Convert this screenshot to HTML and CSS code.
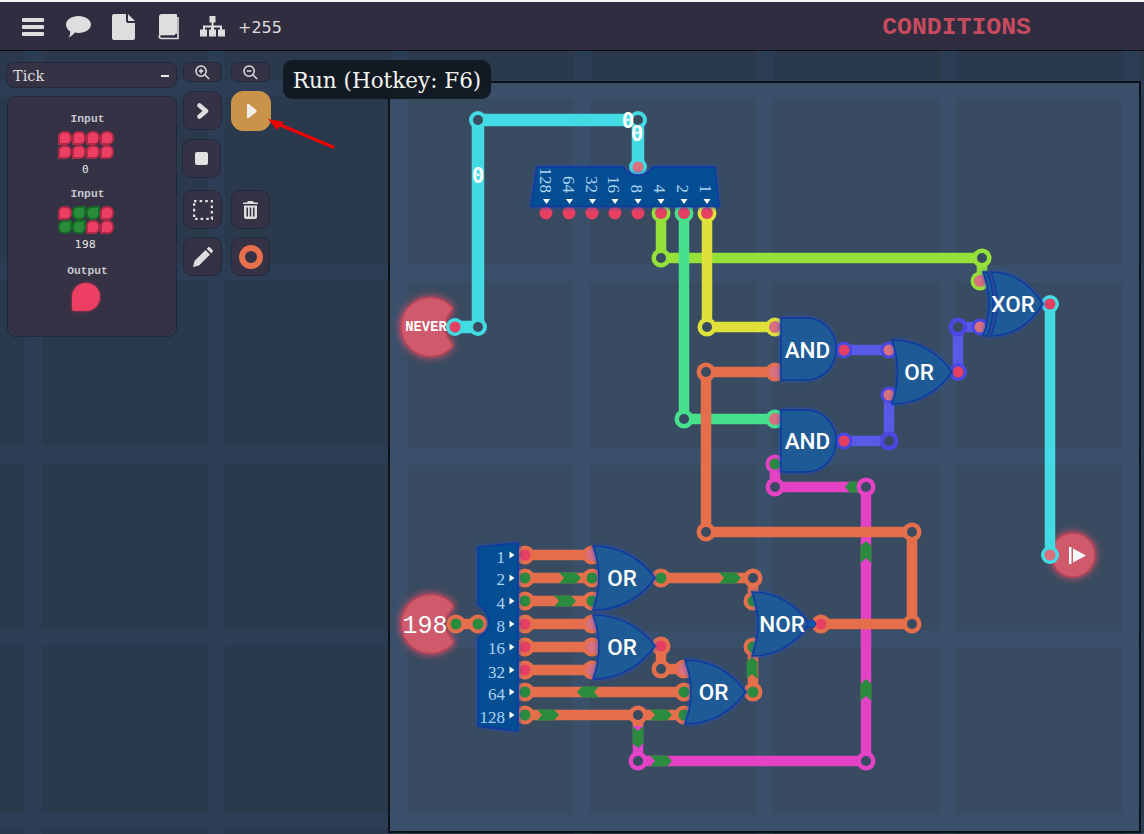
FILE: index.html
```html
<!DOCTYPE html>
<html lang="en">
<head>
<meta charset="utf-8">
<title>Conditions</title>
<link rel="stylesheet" href="styles.css">
</head>
<body>
<header class="topbar">
  <nav class="topnav">
    <svg class="ico i-menu" viewBox="0 0 22 18"><path d="M1 0h20a1 1 0 0 1 1 1v2a1 1 0 0 1-1 1H1a1 1 0 0 1-1-1V1a1 1 0 0 1 1-1zM1 7h20a1 1 0 0 1 1 1v2a1 1 0 0 1-1 1H1a1 1 0 0 1-1-1V8a1 1 0 0 1 1-1zM1 14h20a1 1 0 0 1 1 1v2a1 1 0 0 1-1 1H1a1 1 0 0 1-1-1v-2a1 1 0 0 1 1-1z"/></svg>
    <svg class="ico i-chat" viewBox="0 0 25 22"><path d="M12.500 0C19.400 0 25 3.700 25 8.500S19.400 17 12.500 17c-1.300 0-2.500-.1-3.700-.4C7.300 18.500 5.200 20.500 2.700 21.700c.8-1.400 1.500-3.300 1.600-6.200C1.700 14 0 11.400 0 8.500 0 3.700 5.600 0 12.500 0z"/></svg>
    <svg class="ico i-file" viewBox="0 0 23 26"><path d="M2 0h12v7a2 2 0 0 0 2 2h7v15a2 2 0 0 1-2 2H2a2 2 0 0 1-2-2V2a2 2 0 0 1 2-2zM16 0l7 7h-7z"/></svg>
    <svg class="ico i-book" viewBox="0 0 21 26"><path d="M3 0h15a1 1 0 0 1 1 1v18a1 1 0 0 1-1 1H3.500C2.400 20 1.500 20.500 1 21V3a3 3 0 0 1 2-3z" /><path class="line" d="M20 3v21.500H4c-3.600 0-3.600-4 0-4h13"/></svg>
    <svg class="ico i-tree" viewBox="0 0 25 21"><path d="M9.500 0h6v6.500h-2v3h8.500v4h3v7h-7v-7h2v-2h-6v2h2v7h-7v-7h2v-2h-6v2h2v7H0v-7h3v-4h8.500v-3h-2z"/></svg>
    <span class="count">+255</span>
  </nav>
  <h1 class="title">CONDITIONS</h1>
</header>

<main class="workspace">
  <aside class="side">
    <div class="leftcol">
      <div class="select"><span>Tick</span><i class="dash"></i></div>
      <section class="pins">
        <h2 class="pin-name">Input</h2>
        <div class="bits">
          <i class="bit"></i><i class="bit"></i><i class="bit"></i><i class="bit"></i>
          <i class="bit"></i><i class="bit"></i><i class="bit"></i><i class="bit"></i>
        </div>
        <p class="pin-val">0</p>
        <h2 class="pin-name second">Input</h2>
        <div class="bits">
          <i class="bit"></i><i class="bit on"></i><i class="bit on"></i><i class="bit"></i>
          <i class="bit on"></i><i class="bit on"></i><i class="bit"></i><i class="bit"></i>
        </div>
        <p class="pin-val">198</p>
        <h2 class="pin-name third">Output</h2>
        <i class="drop"></i>
      </section>
    </div>
    <div class="tools">
      <div class="row">
        <button class="btn small"><svg class="ico" viewBox="0 0 16 16"><circle class="line" cx="6.500" cy="6.500" r="5.500"/><path class="line" d="M4 6.500h5M6.500 4v5M10.500 10.500l4.500 4.500"/></svg></button>
        <button class="btn small"><svg class="ico" viewBox="0 0 16 16"><circle class="line" cx="6.500" cy="6.500" r="5.500"/><path class="line" d="M4 6.500h5M10.500 10.500l4.500 4.500"/></svg></button>
      </div>
      <div class="row tight">
        <button class="btn"><svg class="ico i-next" viewBox="0 0 12 16"><path class="chev" d="M2.500 2.500L9 8l-6.500 5.500"/></svg></button>
        <button class="btn run"><svg class="ico i-play" viewBox="0 0 12 16"><path d="M1 1.500c0-1.200 1-1.800 2-1.100l8 6.300c.9.700.9 1.900 0 2.600l-8 6.300c-1 .7-2 .1-2-1.100z"/></svg></button>
      </div>
      <div class="row"><button class="btn shift"><i class="stop"></i></button></div>
      <div class="row gap">
        <button class="btn"><svg class="ico i-sel" viewBox="0 0 20 20"><path class="dots" d="M1 1H19V19H1Z"/></svg></button>
        <button class="btn"><svg class="ico i-trash" viewBox="0 0 15 18"><path d="M5 0h5l1 1.500h3.500a.5.500 0 0 1 .5.500v1H0V2a.5.500 0 0 1 .5-.5H4zM1 4.500h13V16a2 2 0 0 1-2 2H3a2 2 0 0 1-2-2zM3.500 6.500v9h1.500v-9zM6.750 6.500v9h1.500v-9zM10 6.500v9h1.500v-9z"/></svg></button>
      </div>
      <div class="row">
        <button class="btn"><svg class="ico i-pencil" viewBox="0 0 20 20"><path d="M0 20l1.500-6L12.500 3l4.500 4.500L6 18.500zM13.700 1.800l1.300-1.300c.7-.6 1.500-.6 2.100 0l2.400 2.400c.6.600.6 1.400 0 2.100l-1.300 1.300z"/></svg></button>
        <button class="btn"><i class="ring"></i></button>
      </div>
    </div>
  </aside>

  <section class="board">
    <svg class="circuit" viewBox="390 83 749 748">
      <defs>
        <path id="chev" d="M-11-5.500H6L11 0 6 5.500H-11L-6 0Z"/>
        <path id="tri" d="M-3.500-2.500H3.500L0 2.500Z"/>
      </defs>

      <!-- inputs blocks -->
      <path class="block" d="M453 308A29.500 29.500 0 1 0 453 346L442 327Z"/>
      <path class="block" d="M454 606A29.500 29.500 0 1 0 454 642L442 624Z"/>
      <path class="block" d="M1056 541A22 22 0 1 1 1056 569L1050 555Z"/>

      <!-- wires -->
      <path class="w thick cyan" d="M455 327H478V120H638V167"/>
      <path class="w lime" d="M661 213V258H982V281"/>
      <path class="w green" d="M684 213V419H775"/>
      <path class="w yellow" d="M707 213V327H775"/>
      <path class="w purple" d="M844 350H889M844 441H889V395M958 372V327H982"/>
      <path class="w cyan" d="M1050 304V555"/>
      <path class="w pink" d="M638 715V761H866V487H775V464"/>
      <path class="w orange" d="M821 624H912V532H706V372H775M456 624H478M525 555H592M525 578H592M525 601H592M525 624H592M525 647H592M525 670H592M525 692H684M525 715H684M661 578H753V601M661 646V669H684M753 692V647"/>
      <path class="w orange" d="M638 715V726"/>

      <!-- chevrons -->
      <g class="chevs">
        <use href="#chev" transform="translate(570 578)"/>
        <use href="#chev" transform="translate(565 601)"/>
        <use href="#chev" transform="translate(588 692) rotate(180)"/>
        <use href="#chev" transform="translate(548 715)"/>
        <use href="#chev" transform="translate(661 715)"/>
        <use href="#chev" transform="translate(730 578)"/>
        <use href="#chev" transform="translate(661 761)"/>
        <use href="#chev" transform="translate(752 668) rotate(-90)"/>
        <use href="#chev" transform="translate(638 737) rotate(90)"/>
        <use href="#chev" transform="translate(866 552) rotate(-90)"/>
        <use href="#chev" transform="translate(866 690) rotate(-90)"/>
        <use href="#chev" transform="translate(856 487) rotate(180)"/>
      </g>

      <!-- ring joints -->
      <g class="joints">
        <circle class="c-cyan" cx="478" cy="120" r="9"/><circle class="c-cyan" cx="638" cy="120" r="9"/><circle class="c-cyan" cx="478" cy="327" r="9"/>
        <circle class="c-lime" cx="661" cy="258" r="9.500"/><circle class="c-lime" cx="982" cy="258" r="9.500"/>
        <circle class="c-green" cx="684" cy="419" r="9.500"/>
        <circle class="c-yellow" cx="707" cy="327" r="9.500"/>
        <circle class="c-purple" cx="958" cy="327" r="9.500"/><circle class="c-purple" cx="889" cy="441" r="9.500"/>
        <circle class="c-orange" cx="706" cy="372" r="9.500"/><circle class="c-orange" cx="706" cy="532" r="9.500"/><circle class="c-orange" cx="912" cy="532" r="9.500"/><circle class="c-orange" cx="912" cy="624" r="9.500"/><circle class="c-orange" cx="753" cy="578" r="9.500"/><circle class="c-orange" cx="661" cy="669" r="9.500"/><circle class="c-orange" cx="638" cy="715" r="9.500"/>
        <circle class="c-pink" cx="866" cy="487" r="9.500"/><circle class="c-pink" cx="775" cy="487" r="9.500"/><circle class="c-pink" cx="866" cy="761" r="9.500"/><circle class="c-pink" cx="638" cy="761" r="9.500"/>
      </g>

      <!-- pins -->
      <g class="pinset">
        <circle class="p-cyan" cx="455" cy="327" r="9"/><circle class="p-cyan" cx="638" cy="167" r="9"/><circle class="p-cyan" cx="1050" cy="304" r="9"/><circle class="p-cyan" cx="1050" cy="555" r="9"/>
        <circle class="p-lime" cx="661" cy="213" r="9.500"/><circle class="p-lime" cx="980" cy="281" r="9.500"/>
        <circle class="p-green" cx="684" cy="213" r="9.500"/><circle class="p-green" cx="775" cy="419" r="9.500"/>
        <circle class="p-yellow" cx="707" cy="213" r="9.500"/><circle class="p-yellow" cx="775" cy="327" r="9.500"/>
        <circle class="p-purple" cx="844" cy="350" r="8.500"/><circle class="p-purple" cx="844" cy="441" r="8.500"/><circle class="p-purple" cx="889" cy="350" r="8.500"/><circle class="p-purple" cx="889" cy="395" r="8.500"/><circle class="p-purple" cx="958" cy="372" r="9"/><circle class="p-purple" cx="980" cy="327" r="8.500"/>
        <circle class="p-orange" cx="775" cy="372" r="9.500"/><circle class="p-orange" cx="821" cy="624" r="9.500"/>
        <circle class="p-pink" cx="775" cy="464" r="9.500"/>
        <circle class="p-orange" cx="456" cy="624" r="9.500"/><circle class="p-orange" cx="478" cy="624" r="9.500"/>
        <circle class="p-orange" cx="525" cy="555" r="9.500"/><circle class="p-orange" cx="525" cy="578" r="9.500"/><circle class="p-orange" cx="525" cy="601" r="9.500"/><circle class="p-orange" cx="525" cy="624" r="9.500"/><circle class="p-orange" cx="525" cy="647" r="9.500"/><circle class="p-orange" cx="525" cy="670" r="9.500"/><circle class="p-orange" cx="525" cy="692" r="9.500"/><circle class="p-orange" cx="525" cy="715" r="9.500"/>
        <circle class="p-orange" cx="592" cy="555" r="9.500"/><circle class="p-orange" cx="592" cy="578" r="9.500"/><circle class="p-orange" cx="592" cy="601" r="9.500"/><circle class="p-orange" cx="592" cy="624" r="9.500"/><circle class="p-orange" cx="592" cy="647" r="9.500"/><circle class="p-orange" cx="592" cy="670" r="9.500"/>
        <circle class="p-orange" cx="661" cy="578" r="9.500"/><circle class="p-orange" cx="661" cy="646" r="9.500"/>
        <circle class="p-orange" cx="753" cy="601" r="9.500"/><circle class="p-orange" cx="753" cy="647" r="9.500"/><circle class="p-orange" cx="753" cy="692" r="9.500"/>
        <circle class="p-orange" cx="684" cy="669" r="9.500"/><circle class="p-orange" cx="684" cy="692" r="9.500"/><circle class="p-orange" cx="684" cy="715" r="9.500"/>
      </g>
      <g class="holes">
        <circle cx="478" cy="120" r="5"/><circle cx="638" cy="120" r="5"/><circle cx="478" cy="327" r="5"/>
        <circle cx="661" cy="258" r="5"/><circle cx="982" cy="258" r="5"/><circle cx="684" cy="419" r="5"/><circle cx="707" cy="327" r="5"/>
        <circle cx="958" cy="327" r="5"/><circle cx="889" cy="441" r="5"/>
        <circle cx="706" cy="372" r="5"/><circle cx="706" cy="532" r="5"/><circle cx="912" cy="532" r="5"/><circle cx="912" cy="624" r="5"/><circle cx="753" cy="578" r="5"/><circle cx="661" cy="669" r="5"/><circle cx="638" cy="715" r="5"/>
        <circle cx="866" cy="487" r="5"/><circle cx="775" cy="487" r="5"/><circle cx="866" cy="761" r="5"/><circle cx="638" cy="761" r="5"/>
      </g>
      <g class="off">
        <circle cx="455" cy="327" r="5.500"/><circle cx="1050" cy="304" r="5.500"/><circle cx="958" cy="372" r="5.500"/><circle cx="844" cy="350" r="5.500"/><circle cx="844" cy="441" r="5.500"/><circle cx="661" cy="646" r="5.500"/><circle cx="821" cy="624" r="5.500"/>
        <circle cx="546" cy="213" r="6.500"/><circle cx="569" cy="213" r="6.500"/><circle cx="592" cy="213" r="6.500"/><circle cx="615" cy="213" r="6.500"/><circle cx="638" cy="213" r="6.500"/><circle cx="661" cy="213" r="6"/><circle cx="684" cy="213" r="6"/><circle cx="707" cy="213" r="6"/>
        <circle cx="525" cy="555" r="5.500"/><circle cx="525" cy="624" r="5.500"/><circle cx="525" cy="647" r="5.500"/><circle cx="525" cy="670" r="5.500"/>
      </g>
      <g class="off dim">
        <circle cx="638" cy="167" r="5.500"/><circle cx="1050" cy="555" r="5.500"/><circle cx="775" cy="327" r="6"/><circle cx="775" cy="372" r="6"/><circle cx="775" cy="419" r="6"/><circle cx="889" cy="350" r="5.500"/><circle cx="889" cy="395" r="5.500"/><circle cx="980" cy="281" r="6"/><circle cx="980" cy="327" r="5.500"/>
        <circle cx="592" cy="555" r="6"/><circle cx="592" cy="624" r="6"/><circle cx="592" cy="647" r="6"/><circle cx="592" cy="670" r="6"/><circle cx="684" cy="669" r="6"/>
      </g>
      <g class="on">
        <circle cx="456" cy="624" r="5.500"/><circle cx="478" cy="624" r="5.500"/><circle cx="525" cy="578" r="5.500"/><circle cx="525" cy="601" r="5.500"/><circle cx="525" cy="692" r="5.500"/><circle cx="525" cy="715" r="5.500"/><circle cx="592" cy="578" r="5.500"/><circle cx="592" cy="601" r="5.500"/><circle cx="661" cy="578" r="5.500"/><circle cx="753" cy="601" r="5.500"/><circle cx="753" cy="647" r="5.500"/><circle cx="753" cy="692" r="5.500"/><circle cx="684" cy="692" r="5.500"/><circle cx="684" cy="715" r="5.500"/><circle cx="775" cy="464" r="5.500"/>
      </g>

      <!-- splitters -->
      <path class="part split" d="M537 167H623C630 178 646 178 653 167H715L719 206.500H531Z"/>
      <path class="part split" d="M478 547L518 543V731L478 726V638C486 634 489 628 489 621.500C489 615 486 609 478 605Z"/>
      <g class="tris">
        <use href="#tri" transform="translate(546.500 201.500)"/><use href="#tri" transform="translate(569.500 201.500)"/><use href="#tri" transform="translate(592.500 201.500)"/><use href="#tri" transform="translate(615 201.500)"/><use href="#tri" transform="translate(638 201.500)"/><use href="#tri" transform="translate(661 201.500)"/><use href="#tri" transform="translate(684 201.500)"/><use href="#tri" transform="translate(707 201.500)"/>
        <use href="#tri" transform="translate(512 555) rotate(-90)"/><use href="#tri" transform="translate(512 578) rotate(-90)"/><use href="#tri" transform="translate(512 601) rotate(-90)"/><use href="#tri" transform="translate(512 624) rotate(-90)"/><use href="#tri" transform="translate(512 647) rotate(-90)"/><use href="#tri" transform="translate(512 670) rotate(-90)"/><use href="#tri" transform="translate(512 692) rotate(-90)"/><use href="#tri" transform="translate(512 715) rotate(-90)"/>
      </g>
      <g class="bitlabels vertical">
        <text transform="translate(539.500 193) rotate(90)">128</text>
        <text transform="translate(562.500 193) rotate(90)">64</text>
        <text transform="translate(585.500 193) rotate(90)">32</text>
        <text transform="translate(608 193) rotate(90)">16</text>
        <text transform="translate(631 193) rotate(90)">8</text>
        <text transform="translate(654 193) rotate(90)">4</text>
        <text transform="translate(677 193) rotate(90)">2</text>
        <text transform="translate(700 193) rotate(90)">1</text>
      </g>
      <g class="bitlabels">
        <text x="505" y="562.500">1</text><text x="505" y="585">2</text><text x="505" y="608.500">4</text><text x="505" y="632">8</text><text x="505" y="654">16</text><text x="505" y="678">32</text><text x="505" y="700">64</text><text x="505" y="723">128</text>
      </g>

      <!-- gates -->
      <path class="part" d="M781 318H806A30 31 0 0 1 806 380H781Z"/>
      <path class="part" d="M781 410H806A30 31 0 0 1 806 472H781Z"/>
      <path class="part" d="M892 340C920 340 940 355 952 372C940 389 920 404 892 404Q903 372 892 340Z"/>
      <path class="part" d="M991 272C1015 272 1032 287 1043 304C1032 321 1015 336 991 336Q1003 304 991 272Z"/>
      <path class="part" d="M983 272L987.500 272Q999 304 987.500 336L983 336Q995 304 983 272Z"/>
      <path class="part" d="M593 546C621 546 642 560 655 578C642 596 621 610 593 610Q605 578 593 546Z"/>
      <path class="part" d="M593 615C621 615 642 629 655 646C642 664 621 679 593 679Q605 647 593 615Z"/>
      <path class="part" d="M685 660C713 660 733 675 746 692C733 709 713 724 685 724Q697 692 685 660Z"/>
      <path class="part" d="M752 592C778 592 798 607 809 624C798 641 778 656 752 656Q764 624 752 592Z"/>
      <circle class="bubble" cx="811.500" cy="624" r="4"/>

      <g class="gate-text">
        <text x="807.500" y="357.500">AND</text>
        <text x="807.500" y="448.500">AND</text>
        <text x="919" y="380">OR</text>
        <text x="1013" y="312">XOR</text>
        <text x="622" y="586">OR</text>
        <text x="622" y="655">OR</text>
        <text x="713.500" y="700">OR</text>
        <text x="782" y="632">NOR</text>
      </g>

      <text class="block-name" x="426" y="331">NEVER</text>
      <text class="block-num" x="425" y="633">198</text>
      <path class="outicon" d="M1069 547h2.500v17h-2.500zM1073 548.500L1086 555.500L1073 562.500Z"/>

      <g class="wirevals">
        <text x="478" y="182.500">0</text>
        <text x="628" y="127.500">0</text>
        <text x="637" y="140.500">0</text>
      </g>
    </svg>
  </section>
</main>

<div class="tooltip">Run (Hotkey: F6)</div>
<svg class="arrow" viewBox="0 0 70 34"><path class="shaft" d="M65 29L10 6"/><path class="head" d="M0 1L16 4L9 12Z"/></svg>
</body>
</html>
```
FILE: styles.css
```css
* { box-sizing: border-box; }
html, body { margin: 0; padding: 0; }
body {
  position: relative;
  width: 1144px;
  height: 834px;
  overflow: hidden;
  border-top: 2px solid #f6f6f6;
  display: flex;
  flex-direction: column;
  background:
    linear-gradient(90deg, #2c3d55 17px, transparent 17px) 25px 0 / 183px 100%,
    linear-gradient(#2c3d55 17px, transparent 17px) 0 80px / 100% 183px,
    #2a3a4c;
}
.topbar {
  flex: none;
  height: 49px;
  display: flex;
  align-items: center;
  justify-content: space-between;
  background: #2f2d3f;
  border-bottom: 1px solid #0c0f14;
  padding: 1px 113px 0 22px;
}
.topnav { display: flex; align-items: center; }
.ico { display: block; fill: #dedede; }
.i-menu { width: 22px; height: 18px; margin-right: 22px; }
.i-chat { width: 25px; height: 22px; margin-right: 21px; }
.i-file { width: 23px; height: 26px; margin-right: 23px; }
.i-book { width: 21px; height: 26px; margin-right: 21px; }
.i-tree { width: 25px; height: 21px; margin-right: 13px; }
.line { fill: none; stroke: #dedede; stroke-width: 1.600; }
.count { margin-top: 2px; font: 16px "DejaVu Sans", sans-serif; color: #dedede; }
.title {
  margin: 0;
  font: 700 24.800px "Liberation Mono", monospace;
  color: #c84a5e;
}
.workspace { flex: 1; display: flex; min-height: 0; }
.side {
  flex: none;
  width: 388px;
  display: flex;
  padding: 11px 0 0 6px;
}
.leftcol { width: 171px; margin-right: 6px; display: flex; flex-direction: column; gap: 8px; }
.select {
  height: 26px;
  padding: 1px 7px 0 6px;
  display: flex;
  align-items: center;
  justify-content: space-between;
  background: #353245;
  border: 1px solid #1f2b3a;
  border-radius: 8px;
  font: 14.500px "DejaVu Serif", serif;
  color: #dedede;
}
.dash { width: 8px; height: 2px; background: #e8e8e8; }
.pins {
  height: 241px;
  margin-left: 1px;
  width: 170px;
  padding: 16px 13px 0 0;
  display: flex;
  flex-direction: column;
  align-items: center;
  background: #353245;
  border: 1px solid #1f2b3a;
  border-radius: 8px;
}
.pin-name {
  margin: 0 0 0 4px;
  font: 700 11.300px/13px "Liberation Mono", monospace;
  color: #c6c6ce;
}
.pin-name.second { margin-top: 12px; }
.pin-name.third { margin-top: 14px; }
.bits {
  margin-top: 5px;
  display: grid;
  grid-template-columns: repeat(4, 14px);
  grid-auto-rows: 14px;
}
.bit {
  background: #ed3f63;
  border: 2px solid #b02a48;
  border-radius: 6px 6px 6px 0;
}
.bit.on {
  background: #2a8c3a;
  border-color: #166b26;
  border-radius: 6px 0 6px 6px;
}
.pin-val {
  margin: 4px 0 0;
  font: 11px/13px "DejaVu Sans Mono", monospace;
  letter-spacing: 0.500px;
  color: #e8e8e8;
}
.drop {
  display: block;
  margin-top: 5px;
  width: 28px;
  height: 28px;
  background: #ed3f63;
  border-radius: 14px 14px 14px 2px;
  box-shadow: 0 0 3px #c8304f;
}
.tools { width: 88px; display: flex; flex-direction: column; }
.row { display: flex; gap: 9px; margin-bottom: 9px; }
.row.tight { margin-bottom: 8px; }
.row.gap { margin-top: 3px; margin-bottom: 8px; }
.btn {
  width: 39px;
  height: 39px;
  padding: 0;
  display: flex;
  align-items: center;
  justify-content: center;
  background: #353245;
  border: 1px solid #1f2b3a;
  border-radius: 9px;
}
.btn.small { height: 20px; border-radius: 7px; }
.btn.small .ico { width: 15px; height: 15px; }
.btn.run { width: 40px; height: 40px; background: #c99349; border-color: #c99349; border-radius: 12px; }
.btn.shift { margin-left: -1px; }
.i-next { width: 12px; height: 16px; }
.chev { fill: none; stroke: #dedede; stroke-width: 4.500; stroke-linecap: round; stroke-linejoin: round; }
.i-play { width: 11px; height: 16px; fill: #f0ece6; }
.stop { width: 13px; height: 13px; border-radius: 2px; background: #e2e2e2; }
.i-sel { width: 20px; height: 20px; }
.dots { fill: none; stroke: #dedede; stroke-width: 2.500; stroke-dasharray: 2.600 3; }
.i-trash { width: 15px; height: 18px; }
.i-pencil { width: 20px; height: 20px; }
.ring { width: 24px; height: 24px; border: 6px solid #e8704c; border-radius: 50%; }

.board {
  flex: 1;
  min-width: 0;
  margin: 30px 3px 1px 0;
  border: 2px solid #0e1318;
  background:
    linear-gradient(90deg, #3a506a 17px, transparent 17px) 0 0 / 183px 100%,
    linear-gradient(#3a506a 17px, transparent 17px) 0 -1px / 100% 183px,
    #384b60;
}
.circuit { display: block; width: 100%; height: 100%; }

.w { fill: none; stroke-width: 10.500; stroke-linejoin: round; }
.w.thick { stroke-width: 12.500; }
.cyan { stroke: #42dbe3; }
.lime { stroke: #96e03a; }
.green { stroke: #47e08c; }
.yellow { stroke: #dfe03a; }
.purple { stroke: #5a5ae8; }
.pink { stroke: #e442c4; }
.orange { stroke: #e56f4c; }

.c-cyan, .p-cyan { fill: #42dbe3; }
.c-lime, .p-lime { fill: #96e03a; }
.c-green, .p-green { fill: #47e08c; }
.c-yellow, .p-yellow { fill: #dfe03a; }
.c-purple, .p-purple { fill: #4a48e0; }
.c-pink, .p-pink { fill: #e442c4; }
.c-orange, .p-orange { fill: #e56f4c; }
.holes circle { fill: #384b60; }
.off circle { fill: #e63f62; }
.off.dim circle { fill: #d8707f; }
.on circle { fill: #2a8a3e; }
.chevs use { fill: #2a8a3e; }

.block {
  fill: #cf5a6c;
  stroke: #b84455;
  stroke-width: 1.500;
  filter: drop-shadow(0 0 4px #e8506a);
}
.part {
  fill: #1e5a96;
  stroke: #0f3aa0;
  stroke-width: 1.500;
  filter: drop-shadow(0 0 2px #2450c0);
}
.part.split { fill: #034e92; }
.tris use { fill: #ffffff; }
.bitlabels text {
  font: 17px "Liberation Serif", serif;
  fill: #a9d3f2;
  text-anchor: end;
}
.bubble { fill: #0f57a8; stroke: #0f3aa0; }
.gate-text text {
  font: 500 22.500px Roboto, sans-serif;
  fill: #ffffff;
  text-anchor: middle;
}
.block-name {
  font: 700 13.800px "Liberation Mono", monospace;
  fill: #ffffff;
  text-anchor: middle;
}
.block-num {
  font: 25px "Liberation Mono", monospace;
  fill: #ffffff;
  text-anchor: middle;
}
.outicon { fill: #ffffff; }
.wirevals text {
  font: 700 21px "DejaVu Sans Mono", monospace;
  fill: #ffffff;
  text-anchor: middle;
}

.tooltip {
  position: absolute;
  left: 283px;
  top: 58px;
  width: 208px;
  height: 39px;
  border-radius: 9px;
  background: rgba(16, 24, 32, 0.95);
  color: #f4f4f4;
  font: 21.500px/42px "DejaVu Serif", serif;
  text-align: center;
}
.arrow {
  position: absolute;
  left: 268px;
  top: 116px;
  width: 70px;
  height: 34px;
}
.shaft { stroke: #f40000; stroke-width: 3; stroke-linecap: round; }
.head { fill: #f40000; }
```
